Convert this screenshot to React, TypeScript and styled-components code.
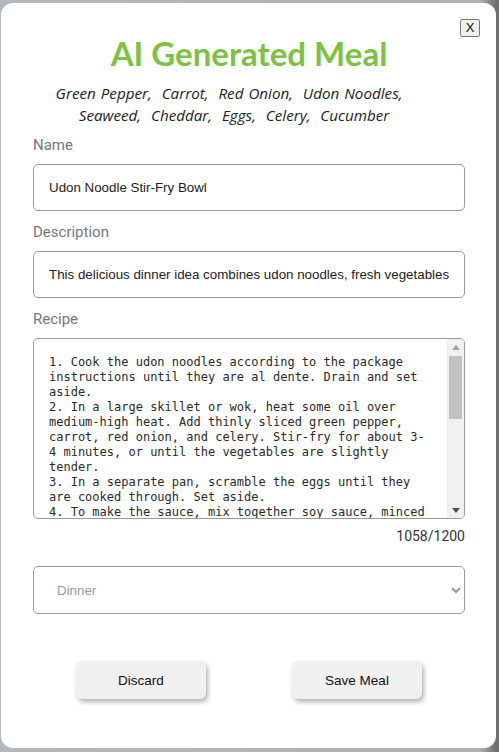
import styled, { createGlobalStyle } from "styled-components";

const GlobalStyle = createGlobalStyle`
  html, body {
    margin: 0;
    padding: 0;
    background: #adb0b5;
    height: 100%;
    overflow: hidden;
  }
  #root {
    display: flex;
  }
`;

const Backdrop = styled.div`
  display: flex;
  width: 499px;
  height: 752px;
  padding: 3px 3px 4px 1px;
  box-sizing: border-box;
  background: linear-gradient(to right, #b4b7bb 0, #adb0b5 480px, #6f6f6f 496px);
`;

const Modal = styled.div`
  position: relative;
  flex: 1;
  background: #ffffff;
  border-radius: 12px;
  padding: 30px 31px 0 32px;
  box-sizing: border-box;
  display: flex;
  flex-direction: column;
  font-family: Roboto, "Liberation Sans", sans-serif;
`;

const CloseButton = styled.button`
  position: absolute;
  top: 16px;
  right: 16px;
  width: 20px;
  height: 18px;
  padding: 0;
  border: 1px solid #767676;
  border-radius: 2px;
  background: #efefef;
  font-family: "Liberation Sans", Arial, sans-serif;
  font-size: 13px;
  color: #111;
  line-height: 16px;
`;

const Title = styled.h1`
  margin: 0;
  text-align: center;
  font-family: Lato, "Open Sans", sans-serif;
  font-weight: 700;
  font-size: 33px;
  line-height: 40px;
  color: #7dc242;
`;

const Ingredients = styled.p`
  margin: 9px 0 0 0;
  padding: 0 30px 0 0;
  text-align: center;
  font-family: "Open Sans", sans-serif;
  font-style: italic;
  font-size: 15.2px;
  line-height: 22px;
  color: #222;
  word-spacing: 1px;
`;

const Label = styled.label`
  display: block;
  margin: 9px 0 9px 0;
  font-family: Roboto, sans-serif;
  font-size: 15px;
  line-height: 20px;
  color: #777;
`;

const Field = styled.div<{ $first?: boolean }>`
  display: flex;
  flex-direction: column;
  margin-top: ${({ $first }) => ($first ? "0" : "2px")};
`;

const TextInput = styled.input`
  height: 47px;
  box-sizing: border-box;
  border: 1px solid #9a9a9a;
  border-radius: 5px;
  padding: 0 15px;
  font-family: "Liberation Sans", Arial, sans-serif;
  font-size: 13.33px;
  color: #222;
  outline: none;
`;

const RecipeBox = styled.div`
  position: relative;
  display: flex;
`;

const RecipeArea = styled.textarea`
  flex: 1;
  height: 181px;
  box-sizing: border-box;
  border: 1px solid #9a9a9a;
  border-radius: 5px;
  padding: 16px 33px 0 15px;
  resize: none;
  font-family: "DejaVu Sans Mono", "Liberation Mono", monospace;
  font-size: 12px;
  line-height: 15px;
  color: #2a2a2a;
  outline: none;
  overflow: hidden;
`;

const ScrollTrack = styled.div`
  position: absolute;
  top: 1px;
  right: 1px;
  bottom: 1px;
  width: 17px;
  background: #f1f1f1;
  border-radius: 0 4px 4px 0;
  display: flex;
  flex-direction: column;
  align-items: center;
`;

const ScrollArrow = styled.div`
  height: 16px;
  width: 17px;
  display: flex;
  align-items: center;
  justify-content: center;
`;

const ScrollThumb = styled.div`
  margin-top: 1px;
  width: 13px;
  height: 63px;
  background: #c1c1c1;
`;

const Spacer = styled.div`
  flex: 1;
`;

const Counter = styled.div`
  margin-top: 8px;
  text-align: right;
  font-family: Roboto, sans-serif;
  font-size: 14px;
  line-height: 18px;
  color: #333;
`;

const MealSelect = styled.select`
  margin-top: 21px;
  height: 48px;
  box-sizing: border-box;
  border: 1px solid #9a9a9a;
  border-radius: 5px;
  padding: 0 16px 0 19px;
  background: #fff;
  font-family: "Liberation Sans", Arial, sans-serif;
  font-size: 13.33px;
  color: #999;
  outline: none;
`;

const ButtonRow = styled.div`
  margin-top: 47px;
  display: flex;
  justify-content: space-around;
`;

const ActionButton = styled.button`
  width: 130px;
  height: 38px;
  border: none;
  border-radius: 6px;
  background: #f0f0f0;
  box-shadow: 2px 3px 5px rgba(0, 0, 0, 0.3);
  font-family: "Liberation Sans", Arial, sans-serif;
  font-size: 13.5px;
  color: #111;
`;

const recipe = `1. Cook the udon noodles according to the package instructions until they are al dente. Drain and set aside.
2. In a large skillet or wok, heat some oil over medium-high heat. Add thinly sliced green pepper, carrot, red onion, and celery. Stir-fry for about 3-4 minutes, or until the vegetables are slightly tender.
3. In a separate pan, scramble the eggs until they are cooked through. Set aside.
4. To make the sauce, mix together soy sauce, minced garlic, grated ginger, a splash of rice vinegar and a teaspoon of sesame oil in a small bowl.
5. Add the cooked udon noodles to the skillet with the vegetables. Pour the sauce over the noodles and toss everything together until well coated.
6. Add the scrambled eggs to the skillet and gently stir to combine.
7. Cut the seaweed into thin strips and the cucumber into matchsticks.
8. Divide the stir-fry between bowls and top with the seaweed, cucumber and a sprinkle of shredded cheddar.
9. Serve immediately while hot and enjoy your udon noodle stir-fry bowl!`;

const ingredients = [
  "Green Pepper",
  "Carrot",
  "Red Onion",
  "Udon Noodles",
  "Seaweed",
  "Cheddar",
  "Eggs",
  "Celery",
  "Cucumber",
];

export default function App() {
  return (
    <>
      <GlobalStyle />
      <Backdrop>
        <Modal>
          <CloseButton>X</CloseButton>
          <Title>AI Generated Meal</Title>
          <Ingredients>
            {ingredients.slice(0, 4).join(",\u00a0 ")},{"\u00a0\u00a0"}
            <br />
            {ingredients.slice(4).join(",\u00a0 ")}
          </Ingredients>
          <Field $first>
            <Label>Name</Label>
            <TextInput defaultValue="Udon Noodle Stir-Fry Bowl" readOnly />
          </Field>
          <Field>
            <Label>Description</Label>
            <TextInput
              defaultValue="This delicious dinner idea combines udon noodles, fresh vegetables, and a savory sauce."
              readOnly
            />
          </Field>
          <Field>
            <Label>Recipe</Label>
            <RecipeBox>
              <RecipeArea defaultValue={recipe} readOnly />
              <ScrollTrack>
                <ScrollArrow>
                  <svg width="8" height="5" viewBox="0 0 8 5">
                    <polygon points="4,0 8,5 0,5" fill="#a3a3a3" />
                  </svg>
                </ScrollArrow>
                <ScrollThumb />
                <Spacer />
                <ScrollArrow>
                  <svg width="8" height="5" viewBox="0 0 8 5">
                    <polygon points="0,0 8,0 4,5" fill="#505050" />
                  </svg>
                </ScrollArrow>
              </ScrollTrack>
            </RecipeBox>
          </Field>
          <Counter>1058/1200</Counter>
          <MealSelect defaultValue="dinner">
            <option value="dinner">Dinner</option>
            <option value="lunch">Lunch</option>
            <option value="breakfast">Breakfast</option>
          </MealSelect>
          <ButtonRow>
            <ActionButton>Discard</ActionButton>
            <ActionButton>Save Meal</ActionButton>
          </ButtonRow>
        </Modal>
      </Backdrop>
    </>
  );
}
